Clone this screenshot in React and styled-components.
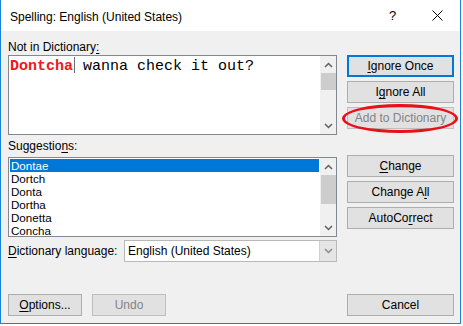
import React from "react";
import styled, { createGlobalStyle } from "styled-components";

const GlobalStyle = createGlobalStyle`
  html, body {
    margin: 0;
    padding: 0;
    background: #ffffff;
  }
  body {
    font-family: "Segoe UI", "Liberation Sans", Arial, sans-serif;
    font-size: 12px;
    color: #000;
  }
  u {
    text-underline-offset: 2px;
  }
`;

const Window = styled.div`
  width: 461px;
  height: 324px;
  box-sizing: border-box;
  border: 1px solid #1883d7;
  border-top: none;
  background: #f0f0f0;
  display: flex;
  flex-direction: column;
`;

const TitleBar = styled.div`
  height: 31px;
  background: #fff;
  display: flex;
  align-items: center;
  padding-left: 9px;
`;

const Title = styled.div`
  flex: 1;
  line-height: 16px;
  padding-top: 2px;
`;

const CaptionButton = styled.div`
  width: 45px;
  height: 31px;
  display: flex;
  align-items: center;
  justify-content: center;
  font-size: 13px;
`;

const Body = styled.div`
  flex: 1;
  display: flex;
  flex-direction: column;
  padding: 8px 6px 7px 7px;
`;

const Row = styled.div`
  display: flex;
  gap: 10px;
  align-items: flex-start;
`;

const LeftCol = styled.div`
  width: 329px;
  display: flex;
  flex-direction: column;
`;

const Label = styled.div`
  height: ${(p) => p.$h}px;
  line-height: ${(p) => p.$h}px;
  white-space: nowrap;
`;

const ButtonStack = styled.div`
  width: 107px;
  display: flex;
  flex-direction: column;
  gap: 4px;
  margin-top: ${(p) => p.$offset}px;
`;

const Button = styled.div`
  position: relative;
  box-sizing: border-box;
  width: ${(p) => p.$w || 107}px;
  height: 22px;
  display: flex;
  align-items: center;
  justify-content: center;
  background: #e1e1e1;
  border: ${(p) =>
    p.$focused ? "2px solid #0078d7" : p.$disabled ? "1px solid #bfbfbf" : "1px solid #adadad"};
  color: ${(p) => (p.$disabled ? "#838383" : "#000")};
  white-space: nowrap;
`;

const Ellipse = styled.div`
  position: absolute;
  left: -6px;
  top: -4px;
  width: 116px;
  height: 29px;
  box-sizing: border-box;
  border: 3px solid #e8101a;
  border-radius: 50%;
  pointer-events: none;
`;

const Field = styled.div`
  box-sizing: border-box;
  width: 329px;
  height: 80px;
  background: #fff;
  border: 1px solid #828790;
  display: flex;
`;

const FieldContent = styled.div`
  flex: 1;
  padding: ${(p) => p.$pad};
  overflow: hidden;
`;

const MonoLine = styled.div`
  font-family: "Liberation Mono", "Courier New", monospace;
  font-size: 15px;
  line-height: 17px;
  white-space: pre;
`;

const Misspelled = styled.span`
  color: #f01818;
  font-weight: bold;
`;

const Caret = styled.span`
  display: inline-block;
  width: 1px;
  height: 16px;
  background: #6d6d6d;
  vertical-align: -3px;
  margin: 0 -1px 0 1px;
`;

const Scrollbar = styled.div`
  width: 16px;
  background: #f0f0f0;
  display: flex;
  flex-direction: column;
`;

const ScrollArrow = styled.div`
  height: 17px;
  display: flex;
  align-items: center;
  justify-content: center;
`;

const Thumb = styled.div`
  height: ${(p) => p.$h}px;
  margin: 0 0 0 1px;
  background: #cdcdcd;
`;

const Fill = styled.div`
  flex: 1;
`;

const ListItem = styled.div`
  height: 13px;
  line-height: 13px;
  font-size: 11.6px;
  padding-left: 1px;
  background: ${(p) => (p.$selected ? "#0078d7" : "transparent")};
  color: ${(p) => (p.$selected ? "#fff" : "#000")};
`;

const LangRow = styled.div`
  display: flex;
  align-items: center;
  margin-top: 3px;
`;

const Combo = styled.div`
  box-sizing: border-box;
  width: 213px;
  height: 22px;
  margin-left: auto;
  margin-right: 117px;
  border: 1px solid #b9b9b9;
  background: #fff;
  display: flex;
`;

const ComboText = styled.div`
  flex: 1;
  padding-left: 3px;
  line-height: 20px;
`;

const ComboArrow = styled.div`
  width: 16px;
  background: #e5e5e5;
  border-left: 1px solid #d0d0d0;
  display: flex;
  align-items: center;
  justify-content: center;
`;

const Spacer = styled.div`
  flex: 1;
`;

const BottomRow = styled.div`
  display: flex;
  gap: 10px;
`;

const Chevron = ({ up, color = "#606060" }) => (
  <svg width="9" height="6" viewBox="0 0 9 6">
    <polyline
      points={up ? "1,5 4.5,1.5 8,5" : "1,1 4.5,4.5 8,1"}
      fill="none"
      stroke={color}
      strokeWidth="1.5"
    />
  </svg>
);

const CloseIcon = () => (
  <svg width="11" height="11" viewBox="0 0 11 11">
    <path d="M0.5 0.5 L10.5 10.5 M10.5 0.5 L0.5 10.5" stroke="#000" strokeWidth="1" />
  </svg>
);

const suggestions = ["Dontae", "Dortch", "Donta", "Dortha", "Donetta", "Concha"];

export default function App() {
  return (
    <>
      <GlobalStyle />
      <Window>
        <TitleBar>
          <Title>Spelling: English (United States)</Title>
          <CaptionButton>?</CaptionButton>
          <CaptionButton>
            <CloseIcon />
          </CaptionButton>
        </TitleBar>
        <Body>
          <Row>
            <LeftCol>
              <Label $h={16}>
                Not in Dictionary<u>:</u>
              </Label>
              <Field>
                <FieldContent $pad="1px 1px">
                  <MonoLine>
                    <Misspelled>Dontcha</Misspelled>
                    <Caret /> wanna check it out?
                  </MonoLine>
                </FieldContent>
                <Scrollbar>
                  <ScrollArrow>
                    <Chevron up />
                  </ScrollArrow>
                  <Thumb $h={17} />
                  <Fill />
                  <ScrollArrow>
                    <Chevron />
                  </ScrollArrow>
                </Scrollbar>
              </Field>
            </LeftCol>
            <ButtonStack $offset={16}>
              <Button $focused>
                <span>
                  <u>I</u>gnore Once
                </span>
              </Button>
              <Button>
                <span>
                  I<u>g</u>nore All
                </span>
              </Button>
              <Button $disabled>
                Add to Dictionary
                <Ellipse />
              </Button>
            </ButtonStack>
          </Row>
          <Row>
            <LeftCol>
              <Label $h={22}>
                Suggestio<u>n</u>s:
              </Label>
              <Field>
                <FieldContent $pad="1px">
                  {suggestions.map((s, i) => (
                    <ListItem key={s} $selected={i === 0}>
                      {s}
                    </ListItem>
                  ))}
                </FieldContent>
                <Scrollbar>
                  <ScrollArrow>
                    <Chevron up />
                  </ScrollArrow>
                  <Thumb $h={29} />
                  <Fill />
                  <ScrollArrow>
                    <Chevron />
                  </ScrollArrow>
                </Scrollbar>
              </Field>
            </LeftCol>
            <ButtonStack $offset={20}>
              <Button>
                <span>
                  <u>C</u>hange
                </span>
              </Button>
              <Button>
                <span>
                  Change A<u>l</u>l
                </span>
              </Button>
              <Button>
                <span>
                  AutoCo<u>r</u>rect
                </span>
              </Button>
            </ButtonStack>
          </Row>
          <LangRow>
            <Label $h={22}>
              <u>D</u>ictionary language:
            </Label>
            <Combo>
              <ComboText>English (United States)</ComboText>
              <ComboArrow>
                <Chevron color="#8a8a8a" />
              </ComboArrow>
            </Combo>
          </LangRow>
          <Spacer />
          <BottomRow>
            <Button $w={74}>
              <span>
                <u>O</u>ptions...
              </span>
            </Button>
            <Button $w={74} $disabled>
              Undo
            </Button>
            <Spacer />
            <Button>Cancel</Button>
          </BottomRow>
        </Body>
      </Window>
    </>
  );
}
